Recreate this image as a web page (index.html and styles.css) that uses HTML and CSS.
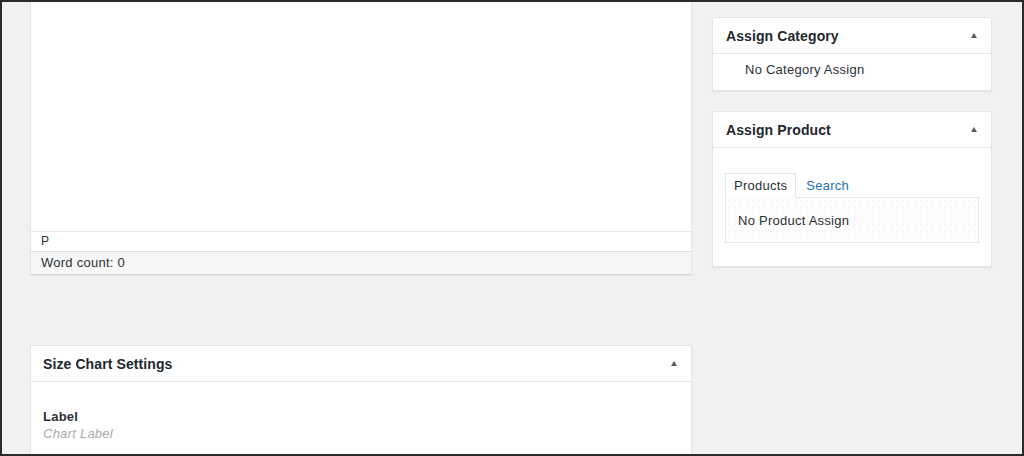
FILE: index.html
```html
<!DOCTYPE html>
<html lang="en">
<head>
    <meta charset="UTF-8">
    <meta name="viewport" content="width=device-width, initial-scale=1.0">
    <title>Edit Size Chart</title>
    <link rel="stylesheet" href="styles.css">
</head>
<body>

    <div class="frame">
        <div class="main">
            <div class="editor">
                <div class="editorArea"></div>
                <div class="pathBar">p</div>
                <div class="wordCount">Word count: 0</div>
            </div>

            <div class="postbox chartBox">
                <div class="boxHeader">
                    <h2>Size Chart Settings</h2>
                    <span class="toggle"></span>
                </div>
                <div class="inside">
                    <div class="fieldLabel">Label</div>
                    <div class="fieldHint">Chart Label</div>
                </div>
            </div>
        </div>

        <div class="sidebar">
            <div class="postbox">
                <div class="boxHeader">
                    <h2>Assign Category</h2>
                    <span class="toggle"></span>
                </div>
                <div class="inside categoryList">No Category Assign</div>
            </div>

            <div class="postbox">
                <div class="boxHeader">
                    <h2>Assign Product</h2>
                    <span class="toggle"></span>
                </div>
                <div class="inside productInside">
                    <ul class="tabs">
                        <li class="tab active">Products</li>
                        <li class="tab"><a href="#">Search</a></li>
                    </ul>
                    <div class="tabPanel">No Product Assign</div>
                </div>
            </div>
        </div>
    </div>

</body>
</html>
```

FILE: styles.css
```css
html, body {
    margin: 0;
    padding: 0;
}
body {
    font-family: "Liberation Sans", Arial, sans-serif;
    font-size: 13px;
    letter-spacing: 0.25px;
    color: #2c3136;
    background-color: #2b2b2b;
}
.frame {
    box-sizing: border-box;
    height: 456px;
    border: 2px solid #2b2b2b;
    background-color: #f1f1f1;
    display: flex;
    gap: 20px;
    padding: 0 30px 0 28px;
    overflow: hidden;
}
.main {
    width: 662px;
    flex-shrink: 0;
}
.sidebar {
    width: 280px;
    padding-top: 15px;
}
.editor {
    background-color: #fff;
    border: 1px solid #e5e5e5;
    border-top: none;
    border-bottom-color: #d4d4d4;
    box-shadow: 0 1px 1px rgba(0, 0, 0, 0.04);
}
.editorArea {
    height: 229px;
    border-bottom: 1px solid #e5e5e5;
}
.pathBar {
    height: 19px;
    line-height: 19px;
    padding-left: 10px;
    font-size: 12px;
    text-transform: uppercase;
    border-bottom: 1px solid #dcdcdc;
}
.wordCount {
    height: 22px;
    line-height: 22px;
    padding-left: 10px;
    background-color: #f7f7f7;
    background-image: radial-gradient(#ececec 0.6px, transparent 0.8px);
    background-size: 6px 6px;
}
.postbox {
    background-color: #fff;
    border: 1px solid #e5e5e5;
    box-shadow: 0 1px 1px rgba(0, 0, 0, 0.04);
    margin-bottom: 20px;
}
.chartBox {
    margin-top: 70px;
    margin-bottom: 0;
}
.boxHeader {
    display: flex;
    align-items: center;
    justify-content: space-between;
    height: 35px;
    padding: 0 14px 0 13px;
    border-bottom: 1px solid #e5e5e5;
}
.boxHeader h2 {
    margin: 0;
    font-size: 14px;
    font-weight: bold;
    letter-spacing: 0.1px;
    color: #23282d;
}
.chartBox .boxHeader {
    padding-left: 12px;
    padding-right: 14px;
}
.toggle {
    width: 0;
    height: 0;
    border-left: 3.5px solid transparent;
    border-right: 3.5px solid transparent;
    border-bottom: 5px solid #555d66;
}
.inside {
    padding: 0 12px 12px;
}
.categoryList {
    padding: 8px 12px 12px 32px;
    line-height: 16px;
}
.productInside {
    padding-top: 25px;
    padding-bottom: 23px;
}
.tabs {
    list-style: none;
    margin: 0;
    padding: 0;
    display: flex;
    align-items: flex-end;
    height: 24px;
}
.tab {
    padding: 0 9px 0 10px;
    line-height: 23px;
}
.tab.active {
    border: 1px solid #e5e5e5;
    border-bottom: 1px solid #fdfdfd;
    background-color: #fff;
    position: relative;
    top: 1px;
    padding: 0 8px;
}
.tab a {
    color: #2271b1;
    text-decoration: none;
}
.tabPanel {
    border: 1px solid #e5e5e5;
    height: 44px;
    line-height: 46px;
    padding-left: 12px;
    background-color: #fdfdfd;
    background-image: radial-gradient(#f0f0f0 0.6px, transparent 0.8px);
    background-size: 6px 6px;
}
.chartBox .inside {
    padding: 26px 12px 40px;
}
.fieldLabel {
    font-weight: bold;
    line-height: 17px;
}
.fieldHint {
    font-style: italic;
    color: #a7aaad;
    line-height: 17px;
}
```
